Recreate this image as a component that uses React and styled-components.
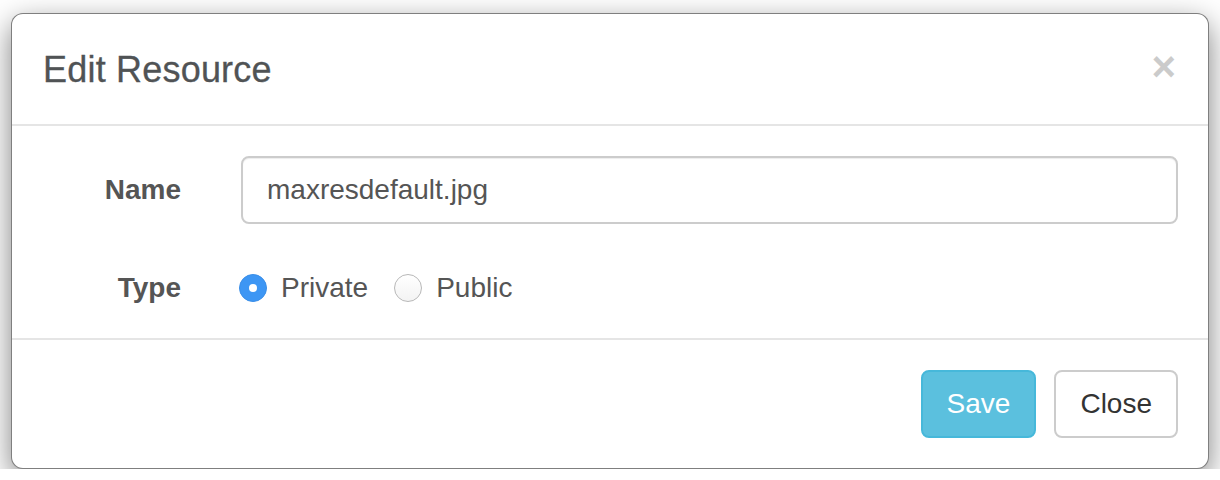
import React, { useState } from 'react';
import styled, { createGlobalStyle } from 'styled-components';

const GlobalStyle = createGlobalStyle`
  html, body {
    margin: 0;
    padding: 0;
    background: #ffffff;
  }
  body {
    font-family: "Liberation Sans", Arial, Helvetica, sans-serif;
  }
  * {
    box-sizing: border-box;
  }
`;

const App = () => {
  const [name, setName] = useState('maxresdefault.jpg');
  const [type, setType] = useState('private');

  return (
    <>
      <GlobalStyle />
      <Modal>
        <Header>
          <Title>Edit Resource</Title>
          <CloseX aria-label="Close">×</CloseX>
        </Header>
        <Body>
          <FormRow>
            <Label>Name</Label>
            <Field>
              <Input value={name} onChange={e => setName(e.target.value)} />
            </Field>
          </FormRow>
          <FormRow>
            <Label>Type</Label>
            <Field padTop>
              <RadioOption onClick={() => setType('private')}>
                <Radio checked={type === 'private'} />
                <RadioText>Private</RadioText>
              </RadioOption>
              <RadioOption onClick={() => setType('public')}>
                <Radio checked={type === 'public'} />
                <RadioText>Public</RadioText>
              </RadioOption>
            </Field>
          </FormRow>
        </Body>
        <Footer>
          <Button variant="info">Save</Button>
          <Button>Close</Button>
        </Footer>
      </Modal>
    </>
  );
};

const Modal = styled.div`
  width: 1198px;
  margin: 13px 11px 0;
  background: #fff;
  border: 1px solid rgba(0, 0, 0, 0.5);
  border-radius: 12px;
  box-shadow: 0 10px 30px rgba(0, 0, 0, 0.5);
`;

const Header = styled.div`
  display: flex;
  align-items: flex-start;
  justify-content: space-between;
  padding: 30px 32px 29px 31px;
  border-bottom: 2px solid #e5e5e5;
`;

const Title = styled.h4`
  margin: 0;
  font-size: 36px;
  font-weight: 400;
  line-height: 51px;
  color: #505355;
  letter-spacing: 0.2px;
  -webkit-text-stroke: 0.3px #505355;
`;

const CloseX = styled.button`
  margin-top: 2px;
  padding: 0;
  border: 0;
  background: transparent;
  font-family: "Liberation Sans", Arial, sans-serif;
  font-size: 42px;
  font-weight: 700;
  line-height: 1;
  color: #000;
  opacity: 0.2;
  cursor: pointer;
`;

const Body = styled.div`
  display: flex;
  flex-direction: column;
  gap: 30px;
  padding: 30px 30px 30px 0;
`;

const FormRow = styled.div`
  display: grid;
  grid-template-columns: 199px 1fr;
`;

const Label = styled.label`
  padding: 14px 30px 0 0;
  text-align: right;
  font-size: 28px;
  font-weight: 700;
  line-height: 40px;
  color: #555;
`;

const Field = styled.div`
  display: flex;
  align-items: center;
  gap: 26px;
  padding-left: ${p => (p.padTop ? '28px' : '30px')};
  padding-top: ${p => (p.padTop ? '14px' : '0')};
`;

const Input = styled.input`
  width: 100%;
  height: 68px;
  padding: 12px 24px;
  border: 2px solid #ccc;
  border-radius: 8px;
  font-family: "Liberation Sans", Arial, sans-serif;
  font-size: 28px;
  color: #555;
  box-shadow: inset 0 1px 1px rgba(0, 0, 0, 0.075);
  outline: none;
`;

const RadioOption = styled.div`
  display: flex;
  align-items: center;
  gap: 14px;
  height: 40px;
  cursor: pointer;
`;

const Radio = styled.span`
  position: relative;
  width: 28px;
  height: 28px;
  border-radius: 50%;
  flex-shrink: 0;
  background: ${p => (p.checked ? '#3d96f4' : 'linear-gradient(#ffffff, #f3f3f3)')};
  border: ${p => (p.checked ? '1px solid #3a8ee8' : '1px solid #b8b8b8')};

  &::after {
    content: '';
    display: ${p => (p.checked ? 'block' : 'none')};
    position: absolute;
    left: 50%;
    top: 50%;
    width: 8px;
    height: 8px;
    margin: -4px 0 0 -4px;
    border-radius: 50%;
    background: #fff;
  }
`;

const RadioText = styled.span`
  font-size: 28px;
  line-height: 40px;
  color: #555;
`;

const Footer = styled.div`
  display: flex;
  justify-content: flex-end;
  gap: 18px;
  padding: 30px 30px 30px;
  border-top: 2px solid #e5e5e5;
`;

const Button = styled.button`
  height: 68px;
  padding: 12px 24px;
  border-radius: 8px;
  font-family: "Liberation Sans", Arial, sans-serif;
  font-size: 28px;
  line-height: 40px;
  cursor: pointer;
  color: ${p => (p.variant === 'info' ? '#fff' : '#333')};
  background: ${p => (p.variant === 'info' ? '#5bc0de' : '#fff')};
  border: 2px solid ${p => (p.variant === 'info' ? '#46b8da' : '#ccc')};
`;

export default App;
